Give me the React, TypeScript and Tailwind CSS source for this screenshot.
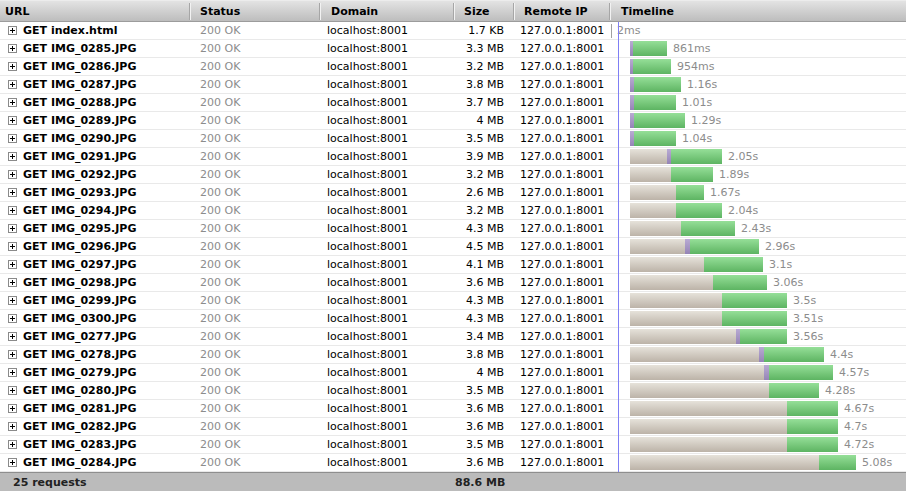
import React from "react";

type Req = {
    file: string;
    size: string;
    wait: number;
    purple: number;
    green: number;
    label: string;
};

const requests: Req[] = [
    { file: "IMG_0285.JPG", size: "3.3 MB", wait: 0, purple: 3, green: 34, label: "861ms" },
    { file: "IMG_0286.JPG", size: "3.2 MB", wait: 0, purple: 3, green: 38, label: "954ms" },
    { file: "IMG_0287.JPG", size: "3.8 MB", wait: 0, purple: 4, green: 47, label: "1.16s" },
    { file: "IMG_0288.JPG", size: "3.7 MB", wait: 0, purple: 4, green: 42, label: "1.01s" },
    { file: "IMG_0289.JPG", size: "4 MB", wait: 0, purple: 4, green: 51, label: "1.29s" },
    { file: "IMG_0290.JPG", size: "3.5 MB", wait: 0, purple: 4, green: 42, label: "1.04s" },
    { file: "IMG_0291.JPG", size: "3.9 MB", wait: 37, purple: 4, green: 51, label: "2.05s" },
    { file: "IMG_0292.JPG", size: "3.2 MB", wait: 41, purple: 0, green: 42, label: "1.89s" },
    { file: "IMG_0293.JPG", size: "2.6 MB", wait: 46, purple: 0, green: 28, label: "1.67s" },
    { file: "IMG_0294.JPG", size: "3.2 MB", wait: 46, purple: 0, green: 46, label: "2.04s" },
    { file: "IMG_0295.JPG", size: "4.3 MB", wait: 51, purple: 0, green: 54, label: "2.43s" },
    { file: "IMG_0296.JPG", size: "4.5 MB", wait: 55, purple: 5, green: 69, label: "2.96s" },
    { file: "IMG_0297.JPG", size: "4.1 MB", wait: 74, purple: 0, green: 59, label: "3.1s" },
    { file: "IMG_0298.JPG", size: "3.6 MB", wait: 83, purple: 0, green: 54, label: "3.06s" },
    { file: "IMG_0299.JPG", size: "4.3 MB", wait: 92, purple: 0, green: 65, label: "3.5s" },
    { file: "IMG_0300.JPG", size: "4.3 MB", wait: 92, purple: 0, green: 65, label: "3.51s" },
    { file: "IMG_0277.JPG", size: "3.4 MB", wait: 106, purple: 4, green: 47, label: "3.56s" },
    { file: "IMG_0278.JPG", size: "3.8 MB", wait: 129, purple: 5, green: 60, label: "4.4s" },
    { file: "IMG_0279.JPG", size: "4 MB", wait: 134, purple: 5, green: 64, label: "4.57s" },
    { file: "IMG_0280.JPG", size: "3.5 MB", wait: 139, purple: 0, green: 50, label: "4.28s" },
    { file: "IMG_0281.JPG", size: "3.6 MB", wait: 157, purple: 0, green: 51, label: "4.67s" },
    { file: "IMG_0282.JPG", size: "3.6 MB", wait: 157, purple: 0, green: 51, label: "4.7s" },
    { file: "IMG_0283.JPG", size: "3.5 MB", wait: 157, purple: 0, green: 51, label: "4.72s" },
    { file: "IMG_0284.JPG", size: "3.6 MB", wait: 189, purple: 0, green: 37, label: "5.08s" },
];

function Separator() {
    return <div className="w-[2px] h-[17px] border-l border-[#a6a6a6] border-r border-r-[#f2f2f2] shrink-0" />;
}

function ExpandIcon() {
    return (
        <span className="w-[9px] h-[9px] border border-[#8a8a8a] bg-white flex items-center justify-center shrink-0 relative">
            <span className="absolute w-[5px] h-[1px] bg-black" />
            <span className="absolute w-[1px] h-[5px] bg-black" />
        </span>
    );
}

function Row({ file, size, children }: { file: string; size: string; children: React.ReactNode }) {
    return (
        <div className="flex h-[18px] items-center border-b border-[#e9e9e9] bg-white whitespace-nowrap">
            <div className="w-[191px] flex items-center pl-[8px] gap-[6px] font-bold text-black">
                <ExpandIcon />
                <span>GET {file}</span>
            </div>
            <div className="w-[130px] pl-[9px] text-[#8c8c8c]">200 OK</div>
            <div className="w-[134px] pl-[6px] text-black">localhost:8001</div>
            <div className="w-[60px] pr-[11px] text-right text-black">{size}</div>
            <div className="w-[96px] pl-[5px] text-black">127.0.0.1:8001</div>
            <div className="flex-1 flex items-center h-full">{children}</div>
        </div>
    );
}

export default function App() {
    return (
        <div
            className="w-[906px] h-[491px] bg-white text-[11px] leading-none overflow-hidden flex flex-col whitespace-nowrap"
            style={{ fontFamily: '"DejaVu Sans", Verdana, sans-serif' }}
        >
            {/* header */}
            <div className="flex items-center h-[22px] border-t border-[#ececec] border-b border-b-[#9c9c9c] bg-gradient-to-b from-[#e3e3e3] to-[#bdbdbd] font-bold text-black shrink-0">
                <div className="w-[189px] pl-[5px]">URL</div>
                <Separator />
                <div className="w-[128px] pl-[9px]">Status</div>
                <Separator />
                <div className="w-[132px] pl-[10px]">Domain</div>
                <Separator />
                <div className="w-[58px] pl-[9px]">Size</div>
                <Separator />
                <div className="w-[94px] pl-[9px]">Remote IP</div>
                <Separator />
                <div className="flex-1 pl-[10px]">Timeline</div>
            </div>

            {/* rows */}
            <div className="relative flex-1 flex flex-col">
                <Row file="index.html" size="1.7 KB">
                    <div className="w-[1px] h-[14px] bg-[#a0a0a0]" />
                    <span className="ml-[5px] text-[#8c8c8c]">2ms</span>
                </Row>
                {requests.map((r) => (
                    <Row key={r.file} file={r.file} size={r.size}>
                        <div className="pl-[19px] flex items-center">
                            {r.wait > 0 && (
                                <div
                                    className="h-[15px] bg-gradient-to-b from-[#e6e2da] to-[#bcb3a8]"
                                    style={{ width: r.wait }}
                                />
                            )}
                            {r.purple > 0 && (
                                <div
                                    className="h-[15px] bg-gradient-to-b from-[#b9abd3] to-[#9584b6]"
                                    style={{ width: r.purple }}
                                />
                            )}
                            <div
                                className="h-[15px] bg-gradient-to-b from-[#95df98] to-[#5db462]"
                                style={{ width: r.green }}
                            />
                            <span className="ml-[6px] text-[#8c8c8c]">{r.label}</span>
                        </div>
                    </Row>
                ))}
                {/* load event marker */}
                <div className="absolute left-[618px] top-0 bottom-0 w-[1px] bg-[#7f7ff5]" />
            </div>

            {/* footer */}
            <div className="flex items-center h-[19px] border-t border-[#8e8e8e] bg-[#bbbbbb] font-bold text-[#222] shrink-0">
                <div className="w-[455px] pl-[13px]">25 requests</div>
                <div className="w-[60px] pr-[10px] text-right">88.6 MB</div>
            </div>
        </div>
    );
}
